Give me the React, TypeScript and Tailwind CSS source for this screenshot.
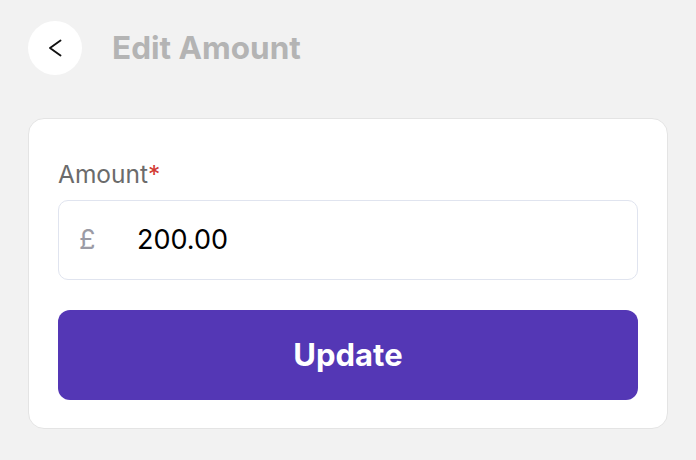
import React, { useState } from 'react';

export default function App() {
  const [amount, setAmount] = useState('200.00');

  return (
    <div
      className="min-h-[460px] w-full bg-[#f2f2f2] px-7 pt-[21px]"
      style={{ fontFamily: 'Inter, "Noto Sans", sans-serif' }}
    >
      {/* header */}
      <div className="flex items-center gap-[30px]">
        <button className="flex h-[54px] w-[54px] items-center justify-center rounded-full bg-white">
          <svg width="24" height="24" viewBox="0 0 24 24" fill="none">
            <path d="M17.5 4.5 L7 12 L17.5 19.5" stroke="#111" strokeWidth="1.9" strokeLinecap="round" strokeLinejoin="round" />
          </svg>
        </button>
        <h1 className="text-[31.5px] font-bold leading-none text-[#b4b4b4]">Edit Amount</h1>
      </div>

      {/* card */}
      <div className="mt-[43px] rounded-2xl border border-[#e4e4e4] bg-white px-[29px] pt-[37px] pb-[28px]">
        <label className="block text-[24.5px] leading-9 text-[#6b6b6b]">
          Amount<span className="text-[#d23a32]">*</span>
        </label>
        <div className="mt-[8px] flex h-[80px] items-center rounded-[10px] border-[1.5px] border-[#e0e4ef] pl-[20px]">
          <span className="w-[58px] shrink-0 text-[27px] text-[#9b9ba5]">£</span>
          <input
            value={amount}
            onChange={e => setAmount(e.target.value)}
            className="w-full bg-transparent text-[27px] text-black outline-none"
            style={{ fontFamily: 'Inter, "Noto Sans", sans-serif' }}
          />
        </div>
        <button className="mt-[30px] flex h-[90px] w-full items-center justify-center rounded-xl bg-[#5437b5] text-[31px] font-bold text-white">
          Update
        </button>
      </div>
    </div>
  );
}
